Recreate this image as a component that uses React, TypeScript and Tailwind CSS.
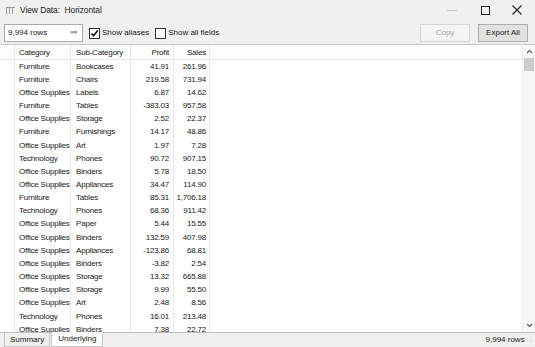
import React from "react";

const rows: [string, string, string, string][] = [
  ["Furniture", "Bookcases", "41.91", "261.96"],
  ["Furniture", "Chairs", "219.58", "731.94"],
  ["Office Supplies", "Labels", "6.87", "14.62"],
  ["Furniture", "Tables", "-383.03", "957.58"],
  ["Office Supplies", "Storage", "2.52", "22.37"],
  ["Furniture", "Furnishings", "14.17", "48.86"],
  ["Office Supplies", "Art", "1.97", "7.28"],
  ["Technology", "Phones", "90.72", "907.15"],
  ["Office Supplies", "Binders", "5.78", "18.50"],
  ["Office Supplies", "Appliances", "34.47", "114.90"],
  ["Furniture", "Tables", "85.31", "1,706.18"],
  ["Technology", "Phones", "68.36", "911.42"],
  ["Office Supplies", "Paper", "5.44", "15.55"],
  ["Office Supplies", "Binders", "132.59", "407.98"],
  ["Office Supplies", "Appliances", "-123.86", "68.81"],
  ["Office Supplies", "Binders", "-3.82", "2.54"],
  ["Office Supplies", "Storage", "13.32", "665.88"],
  ["Office Supplies", "Storage", "9.99", "55.50"],
  ["Office Supplies", "Art", "2.48", "8.56"],
  ["Technology", "Phones", "16.01", "213.48"],
  ["Office Supplies", "Binders", "7.38", "22.72"],
];

const Check = ({ checked }: { checked: boolean }) => (
  <span className="w-[11px] h-[11px] border border-[#333] bg-white flex items-center justify-center">
    {checked && (
      <svg width="9" height="9" viewBox="0 0 9 9">
        <path d="M1.5 4.5 L3.5 6.8 L7.8 1.5" stroke="#111" strokeWidth="1.6" fill="none" />
      </svg>
    )}
  </span>
);

const Row = ({ r }: { r: [string, string, string, string] }) => (
  <div className="flex h-[13.16px] shrink-0 items-center leading-none tracking-[-0.2px]">
    <div className="w-[15px] h-full border-r border-[#e8e8e8]" />
    <div className="w-[56px] h-full pl-[4px] flex items-center border-r border-[#e8e8e8] whitespace-nowrap">{r[0]}</div>
    <div className="w-[60px] h-full pl-[5px] flex items-center border-r border-[#e8e8e8] whitespace-nowrap">{r[1]}</div>
    <div className="w-[43px] h-full pr-[4px] flex items-center justify-end border-r border-[#e8e8e8]">{r[2]}</div>
    <div className="w-[36px] h-full pr-[3px] flex items-center justify-end border-r border-[#e8e8e8]">{r[3]}</div>
  </div>
);

export default function App() {
  return (
    <div className="w-[535px] h-[347px] flex flex-col bg-[#f0f0f0] text-[8px] text-[#1a1a1a] overflow-hidden" style={{ fontFamily: '"Liberation Sans", Arial, sans-serif' }}>
      {/* title bar */}
      <div className="h-[20px] flex items-center shrink-0">
        <svg width="9" height="7" viewBox="0 0 9 7" className="ml-[6px] mr-[5px]">
          <rect x="0" y="0" width="9" height="1" fill="#9a9a9a" />
          <rect x="0" y="0" width="1" height="7" fill="#9a9a9a" />
          <rect x="3" y="0" width="1" height="7" fill="#9a9a9a" />
          <rect x="6" y="0" width="1" height="7" fill="#9a9a9a" />
        </svg>
        <span className="text-[8.5px] text-[#222] tracking-[-0.1px]">View Data:&nbsp; Horizontal</span>
        <div className="ml-auto mr-[2px] flex items-center">
          <div className="w-[34px] h-[20px] flex items-center justify-center">
            <div className="w-[10px] h-px bg-[#c8c8c8]" />
          </div>
          <div className="w-[32px] h-[20px] flex items-center justify-center">
            <div className="w-[9px] h-[9px] border border-[#222]" />
          </div>
          <div className="w-[32px] h-[20px] flex items-center justify-center">
            <svg width="10" height="10" viewBox="0 0 10 10">
              <path d="M0.5 0.5 L9.5 9.5 M9.5 0.5 L0.5 9.5" stroke="#222" strokeWidth="1.1" />
            </svg>
          </div>
        </div>
      </div>
      {/* toolbar */}
      <div className="h-[25px] flex items-start pt-[4px] shrink-0 px-[4px] border-b border-[#c9c9c9]">
        <div className="w-[79px] h-[18px] bg-white border border-[#a9a9a9] flex items-center pl-[3px] pr-[4px]">
          <span>9,994 rows</span>
          <span className="ml-auto text-[#a0a0a0] text-[9px]">➡</span>
        </div>
        <div className="h-[18px] flex items-center ml-[6px] gap-[2px]">
          <Check checked />
          <span>Show aliases</span>
        </div>
        <div className="h-[18px] flex items-center ml-[6px] gap-[2px]">
          <Check checked={false} />
          <span>Show all fields</span>
        </div>
        <div className="ml-auto w-[50px] h-[18px] border border-[#d6d6d6] bg-[#f4f4f4] text-[#a8a8a8] flex items-center justify-center">Copy</div>
        <div className="ml-[8px] mr-[3px] w-[50px] h-[18px] border border-[#adadad] bg-[#e1e1e1] flex items-center justify-center">Export All</div>
      </div>
      {/* table */}
      <div className="flex-1 flex bg-white overflow-hidden">
        <div className="flex-1 flex flex-col overflow-hidden">
          <div className="h-[15px] shrink-0 flex items-center border-b border-[#e1eaf2] bg-[#fdfdfd] tracking-[-0.2px]">
            <div className="w-[15px] h-full border-r border-[#e8e8e8]" />
            <div className="w-[56px] h-full pl-[4px] pt-[2px] flex items-center border-r border-[#e8e8e8]">Category</div>
            <div className="w-[60px] h-full pl-[5px] pt-[2px] flex items-center border-r border-[#e8e8e8]">Sub-Category</div>
            <div className="w-[43px] h-full pr-[4px] pt-[2px] flex items-center justify-end border-r border-[#e8e8e8]">Profit</div>
            <div className="w-[36px] h-full pr-[3px] pt-[2px] flex items-center justify-end border-r border-[#e8e8e8]">Sales</div>
          </div>
          {rows.map((r, i) => (
            <Row key={i} r={r} />
          ))}
        </div>
        {/* scrollbar */}
        <div className="w-[13px] flex flex-col bg-[#f7f7f7] border-l border-[#f0f0f0]">
          <div className="h-[13px] flex items-center justify-center">
            <svg width="7" height="5" viewBox="0 0 7 5"><path d="M1 4 L3.5 1.5 L6 4" stroke="#606060" strokeWidth="1.2" fill="none" /></svg>
          </div>
          <div className="mx-[1px] h-[13px] bg-[#cdcdcd]" />
          <div className="flex-1" />
          <div className="h-[13px] flex items-center justify-center">
            <svg width="7" height="5" viewBox="0 0 7 5"><path d="M1 1 L3.5 3.5 L6 1" stroke="#606060" strokeWidth="1.2" fill="none" /></svg>
          </div>
        </div>
      </div>
      {/* bottom */}
      <div className="h-[15px] shrink-0 flex items-start border-t border-[#bdbdbd]">
        <div className="ml-[4px] h-[14px] px-[5px] flex items-center border border-t-0 border-[#c6c6c6] bg-[#f0f0f0]">Summary</div>
        <div className="ml-[1px] h-[15px] -mt-px px-[6px] flex items-center bg-white border border-t-0 border-[#c6c6c6]">Underlying</div>
        <div className="ml-auto h-[14px] flex items-center pr-[3px]">
          <span>9,994 rows</span>
          <span className="ml-[4px] text-[#b0b0b0] text-[6px]">.:</span>
        </div>
      </div>
    </div>
  );
}
